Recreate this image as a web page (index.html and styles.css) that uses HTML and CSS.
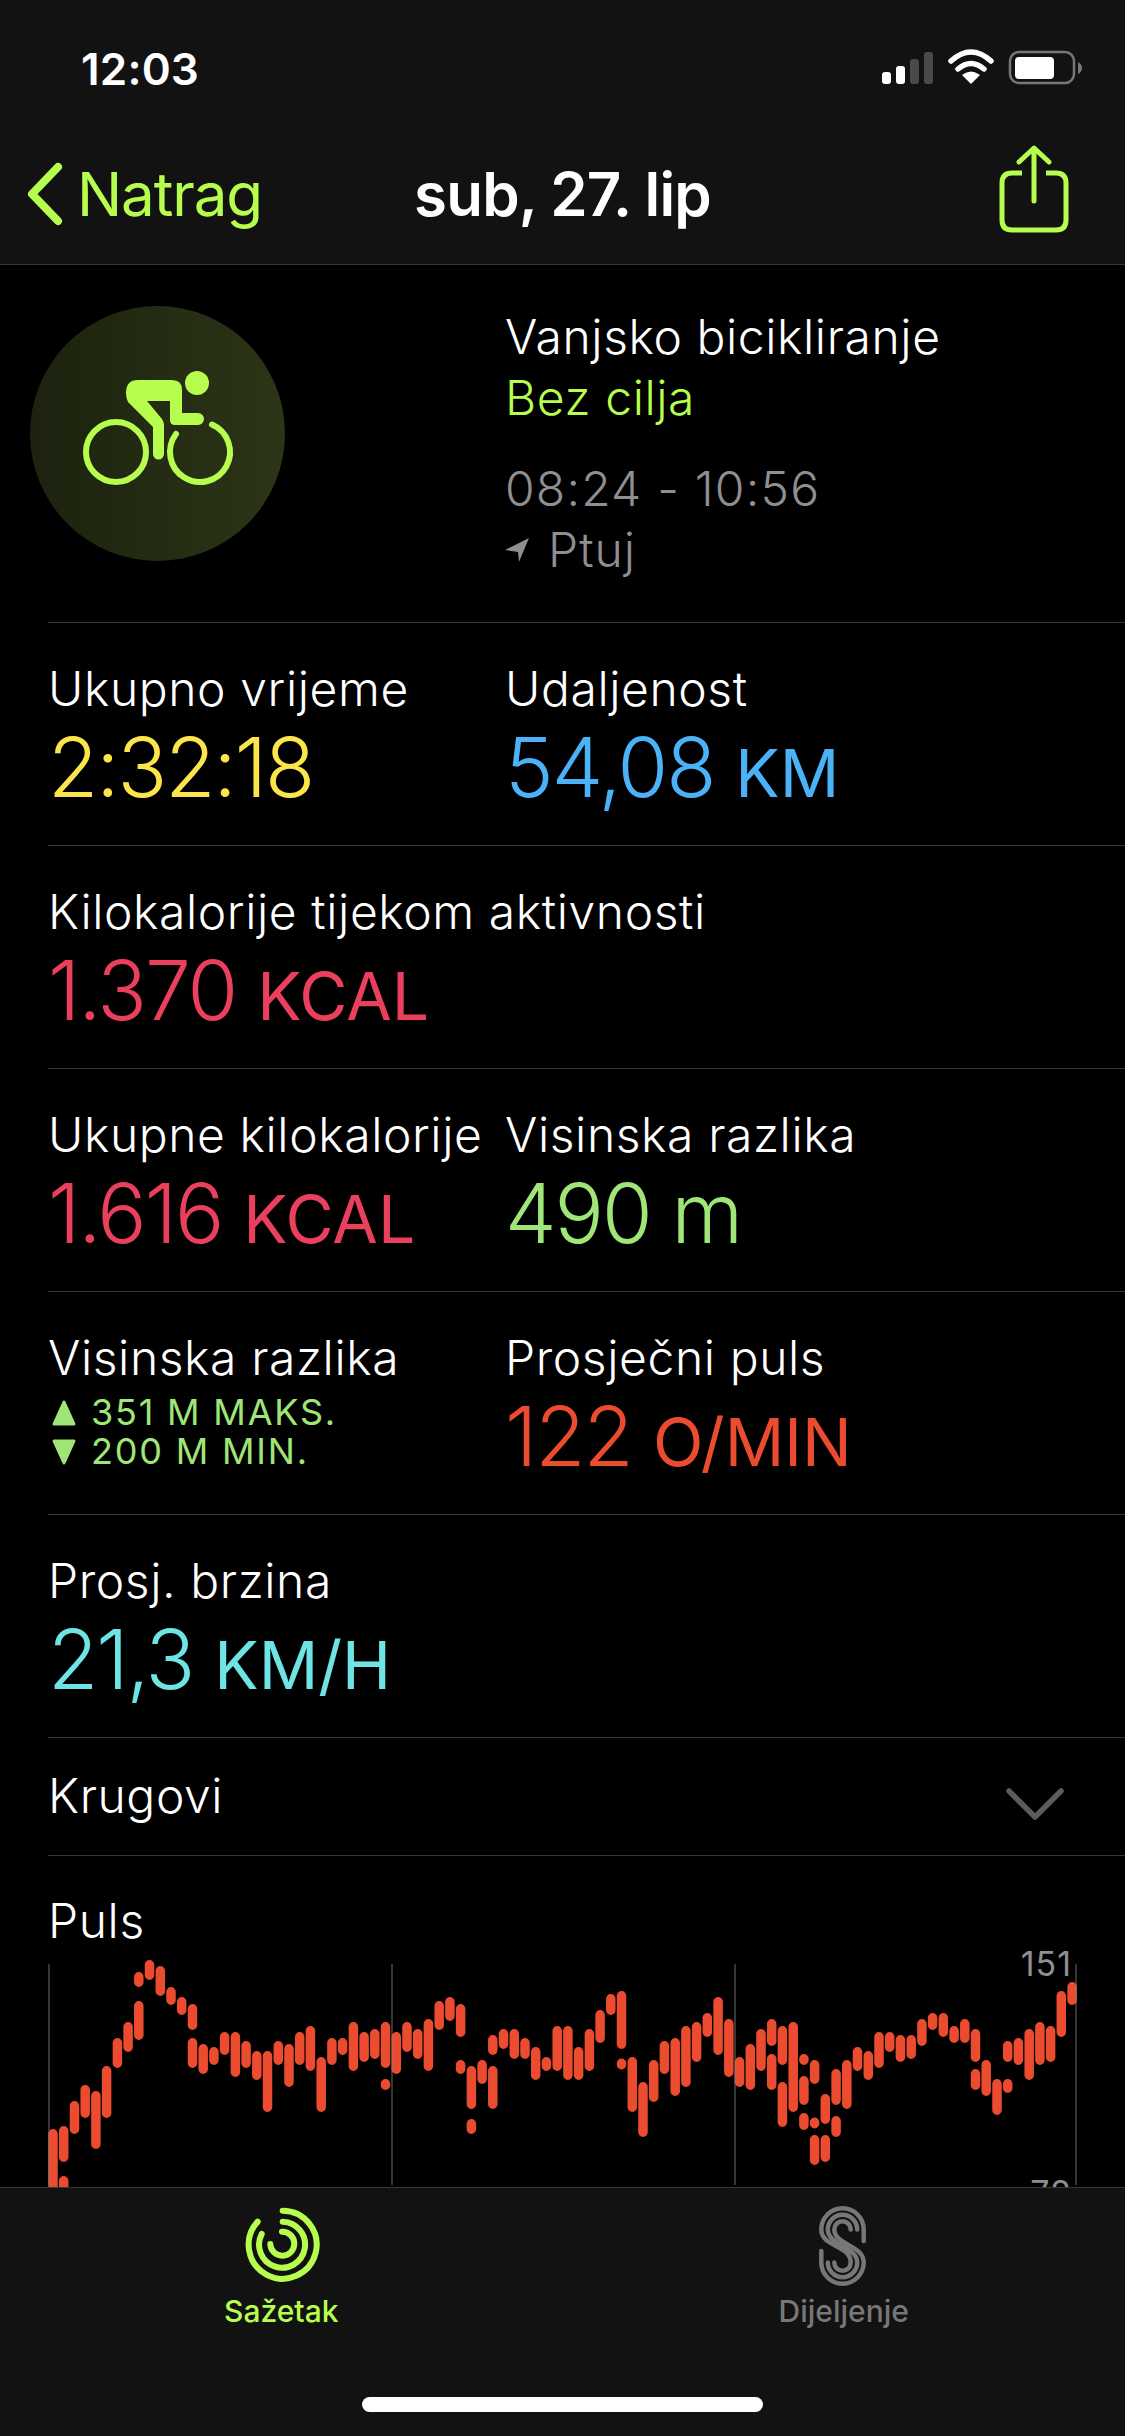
FILE: index.html

```html
<!DOCTYPE html>
<html lang="hr">
<head>
<meta charset="UTF-8" />
<meta name="viewport" content="width=device-width, initial-scale=1" />
<title>Vanjsko bicikliranje</title>
<link rel="stylesheet" href="styles.css">
</head>
<body>
<div class="app">

  <header class="top">
    <div class="status">
      <span class="clock">12:03</span>
      <svg class="status-icons" width="240" height="60" viewBox="0 0 240 60">
        <rect x="22" y="33" width="9" height="12" rx="3" fill="#fff"/>
        <rect x="36" y="27" width="9" height="18" rx="3" fill="#fff"/>
        <rect x="50" y="20" width="9" height="25" rx="3" fill="#4a4a4a"/>
        <rect x="64" y="13" width="9" height="32" rx="3" fill="#4a4a4a"/>
        <path d="M91 22 Q111 4 131 22" fill="none" stroke="#fff" stroke-width="5.5" stroke-linecap="round"/>
        <path d="M98 30 Q111 19 124 30" fill="none" stroke="#fff" stroke-width="5.5" stroke-linecap="round"/>
        <path d="M111 45 L102 36 Q111 29 120 36 Z" fill="#fff"/>
        <rect x="150" y="13" width="64" height="31" rx="9" fill="none" stroke="#777" stroke-width="2.5"/>
        <rect x="155" y="18" width="39" height="22" rx="4" fill="#fff"/>
        <path d="M218 23 Q222 25 222 29 Q222 33 218 35 Z" fill="#777"/>
      </svg>
    </div>
    <nav class="nav">
      <div class="back">
        <svg width="38" height="64" viewBox="0 0 38 64">
          <path d="M32 5 L6 32 L32 59" fill="none" stroke="#b7fd4e" stroke-width="8" stroke-linecap="round" stroke-linejoin="round"/>
        </svg>
        <span>Natrag</span>
      </div>
      <div class="nav-title">sub, 27. lip</div>
      <svg class="share" width="100" height="120" viewBox="0 0 100 120">
        <path d="M42 43 H32 Q22 43 22 53 V90 Q22 100 32 100 H76 Q86 100 86 90 V53 Q86 43 76 43 H66" fill="none" stroke="#b7fd4e" stroke-width="5"/>
        <path d="M54 71 V19 M39 32 L54 18 L69 32" fill="none" stroke="#b7fd4e" stroke-width="5" stroke-linecap="round" stroke-linejoin="round"/>
      </svg>
    </nav>
  </header>

  <main class="content">

    <section class="row summary">
      <div class="activity-icon">
        <svg width="200" height="160" viewBox="0 0 200 160">
          <circle cx="137" cy="33" r="12" fill="#b7fd4e"/>
          <path d="M78 30 H112 Q122 30 122 40 V63 H138 A6 6 0 0 1 138 75 H115 Q110 75 110 70 V51 H87 L102 69 Q104 72 104 75 V104 A5.5 5.5 0 0 1 93 104 V77 L68 52 Q66 48 66 43 Q66 30 78 30 Z" fill="#b7fd4e"/>
          <circle cx="56" cy="102" r="30" fill="none" stroke="#b7fd4e" stroke-width="6"/>
          <path d="M116 84 A30 30 0 1 0 152 74.500" fill="none" stroke="#b7fd4e" stroke-width="6" stroke-linecap="round"/>
        </svg>
      </div>
      <div class="summary-text">
        <div>Vanjsko bicikliranje</div>
        <div class="lime">Bez cilja</div>
        <div class="muted gap">08:24 - 10:56</div>
        <div class="muted place">
          <svg width="24" height="24" viewBox="0 0 24 24"><path d="M24 0 L0 12 L13 14 L14 24 Z" fill="#8e8e93"/></svg>
          <span>Ptuj</span>
        </div>
      </div>
    </section>

    <section class="row">
      <div class="metric">
        <div class="label">Ukupno vrijeme</div>
        <div class="value yellow">2:32:18</div>
      </div>
      <div class="metric">
        <div class="label">Udaljenost</div>
        <div class="value blue">54,08 <span class="unit">KM</span></div>
      </div>
    </section>

    <section class="row">
      <div class="metric">
        <div class="label">Kilokalorije tijekom aktivnosti</div>
        <div class="value pink">1.370 <span class="unit">KCAL</span></div>
      </div>
    </section>

    <section class="row">
      <div class="metric">
        <div class="label">Ukupne kilokalorije</div>
        <div class="value pink">1.616 <span class="unit">KCAL</span></div>
      </div>
      <div class="metric">
        <div class="label">Visinska razlika</div>
        <div class="value green">490 m</div>
      </div>
    </section>

    <section class="row">
      <div class="metric">
        <div class="label">Visinska razlika</div>
        <div class="elevation">
          <div class="elevation-line">
            <svg width="24" height="26" viewBox="0 0 24 26"><path d="M12 2 L22 24 H2 Z" fill="#a0e578" stroke="#a0e578" stroke-width="3" stroke-linejoin="round"/></svg>
            <span>351 M MAKS.</span>
          </div>
          <div class="elevation-line">
            <svg width="24" height="26" viewBox="0 0 24 26"><path d="M12 24 L22 2 H2 Z" fill="#a0e578" stroke="#a0e578" stroke-width="3" stroke-linejoin="round"/></svg>
            <span>200 M MIN.</span>
          </div>
        </div>
      </div>
      <div class="metric">
        <div class="label">Prosječni puls</div>
        <div class="value red">122 <span class="unit">O/MIN</span></div>
      </div>
    </section>

    <section class="row">
      <div class="metric">
        <div class="label">Prosj. brzina</div>
        <div class="value cyan">21,3 <span class="unit">KM/H</span></div>
      </div>
    </section>

    <section class="row laps">
      <div class="label">Krugovi</div>
      <svg class="laps-arrow" width="60" height="34" viewBox="0 0 60 34">
        <path d="M4 4 L30 30 L56 4" fill="none" stroke="#5c5c5e" stroke-width="5.500" stroke-linecap="round" stroke-linejoin="round"/>
      </svg>
    </section>

    <section class="pulse">
      <div class="label pulse-label">Puls</div>
      <svg id="pulse-chart" class="pulse-chart" width="1125" height="232" viewBox="0 0 1125 232">
        <text class="axis-text" x="1072" y="23">151</text>
        <text class="axis-text" x="1072" y="252">78</text>
      </svg>
    </section>

  </main>

  <footer class="tabbar">
    <div class="tabs">
      <div class="tab active">
        <svg width="100" height="90" viewBox="0 0 100 90">
          <g fill="none" stroke="#b7fd4e" stroke-width="6" stroke-linecap="round">
            <path d="M51.700 9.700 A34 34 0 1 1 26.700 20.600"/>
            <path d="M51.700 20.700 A23 23 0 1 1 30.700 33"/>
            <path d="M51 30.700 A12 12 0 1 1 39.300 43"/>
          </g>
        </svg>
        <span>Sažetak</span>
      </div>
      <div class="tab">
        <svg width="90" height="90" viewBox="0 0 90 90">
          <g fill="none" stroke="#777" stroke-width="4.500" stroke-linecap="round">
            <path d="M64.700 40 V28.500 A21.200 21.200 0 0 0 22.300 28.500 C22.300 46 51.700 44 51.700 61.500 A8.200 8.200 0 0 1 35.300 61.500"/>
            <path d="M58.200 28.500 A14.700 14.700 0 0 0 28.800 28.500 C28.800 44 58.200 46 58.200 61.500 A14.700 14.700 0 0 1 28.800 61.500"/>
            <path d="M51.700 28.500 A8.200 8.200 0 0 0 35.300 28.500 C35.300 44 64.700 44 64.700 61.500 A21.200 21.200 0 0 1 22.300 61.500 V50"/>
          </g>
        </svg>
        <span>Dijeljenje</span>
      </div>
    </div>
    <div class="home-bar"></div>
  </footer>

</div>
<script src="chart.js"></script>
</body>
</html>
```

FILE: styles.css

```css
* {
  box-sizing: border-box;
}
body {
  margin: 0;
  background: #000;
  color: #fff;
  font-family: Inter, "Liberation Sans", sans-serif;
}
.app {
  width: 1125px;
  height: 2436px;
  display: flex;
  flex-direction: column;
  overflow: hidden;
}

/* Status bar and nav */
.top {
  height: 265px;
  background: #121212;
  border-bottom: 1px solid #38383a;
}
.status {
  height: 138px;
  padding: 0 25px 0 81px;
  display: flex;
  align-items: center;
  justify-content: space-between;
}
.clock {
  font-size: 44px;
  font-weight: 600;
  letter-spacing: 0.200px;
}
.nav {
  height: 112px;
  margin-bottom: 14px;
  padding: 0 26px;
  display: grid;
  grid-template-columns: 1fr auto 1fr;
  grid-template-rows: 112px;
  align-items: center;
}
.back {
  display: flex;
  align-items: center;
  gap: 13px;
  color: #b7fd4e;
  font-size: 60px;
  letter-spacing: -1.100px;
}
.nav-title {
  font-size: 60px;
  font-weight: 600;
  letter-spacing: -0.800px;
}
.share {
  justify-self: end;
  margin-right: 19px;
  margin-bottom: 8px;
}

/* Rows */
.content {
  flex: 1;
  min-height: 0;
  overflow: hidden;
}
.row {
  height: 223px;
  margin-left: 48px;
  padding-top: 37px;
  display: grid;
  grid-template-columns: 457px 1fr;
  border-bottom: 1px solid #38383a;
}
.metric {
  white-space: nowrap;
}
.label {
  font-size: 48px;
  font-weight: 350;
  line-height: 58px;
  letter-spacing: 0.600px;
}
.value {
  margin-top: 3px;
  font-size: 82px;
  font-weight: 350;
  line-height: 94px;
  letter-spacing: -2px;
}
.unit {
  font-size: 66px;
  font-weight: 400;
  letter-spacing: 0;
}
.yellow { color: #fbe54a; }
.blue { color: #4cb2f8; }
.pink { color: #eb3f5e; }
.green { color: #a0e578; }
.red { color: #eb4b2e; }
.cyan { color: #6fe4e4; }
.lime { color: #b7fd4e; }
.muted { color: #8e8e93; }

/* Workout summary */
.summary {
  height: 358px;
  padding-top: 41px;
}
.activity-icon {
  width: 255px;
  height: 255px;
  margin-left: -18px;
  border-radius: 50%;
  background: linear-gradient(90deg, #1c220e, #2c3517);
  display: flex;
  align-items: center;
  justify-content: center;
}
.activity-icon svg {
  margin-left: 5px;
  margin-bottom: 7px;
}
.summary-text {
  font-size: 48px;
  font-weight: 350;
  line-height: 61px;
  letter-spacing: 0.600px;
  white-space: nowrap;
}
.gap {
  margin-top: 30px;
  letter-spacing: 1.200px;
}
.place {
  display: flex;
  align-items: center;
  gap: 19px;
  letter-spacing: 1px;
}

/* Elevation min and max */
.elevation {
  margin-top: 6px;
  padding-left: 4px;
  color: #a0e578;
  font-size: 36px;
  font-weight: 400;
  line-height: 39px;
  letter-spacing: 1.800px;
}
.elevation-line {
  display: flex;
  align-items: center;
  gap: 15px;
}

.laps {
  height: 118px;
  padding-top: 29px;
  padding-right: 60px;
  display: flex;
  justify-content: space-between;
}
.laps-arrow {
  margin-top: 20px;
}

/* Heart rate chart */
.pulse-label {
  margin-left: 48px;
  margin-top: 36px;
  margin-bottom: 3px;
}
.pulse-chart {
  display: block;
  overflow: visible;
}
.axis-text {
  fill: #8e8e93;
  font-size: 34px;
  text-anchor: end;
  font-family: Inter, sans-serif;
  letter-spacing: 1px;
}

/* Tab bar */
.tabbar {
  height: 249px;
  padding-top: 13px;
  background: #121212;
  border-top: 1px solid #38383a;
  display: flex;
  flex-direction: column;
}
.tabs {
  display: grid;
  grid-template-columns: 1fr 1fr;
}
.tab {
  display: flex;
  flex-direction: column;
  align-items: center;
  color: #777;
  font-size: 30px;
  font-weight: 500;
  line-height: 40px;
}
.tab.active {
  color: #b7fd4e;
}
.home-bar {
  width: 401px;
  height: 15px;
  margin: auto auto 24px;
  background: #fff;
  border-radius: 8px;
}
```

FILE: chart.js

```js
// Heart rate ranges per column, as [top, bottom] in chart pixels
const ranges = [
  [[176, 240]], [[173, 209], [223, 240]], [[148, 181]], [[132, 165]], [[138, 196]], [[113, 165]],
  [[85, 115]], [[69, 99]], [[48, 87], [19, 34]], [[7, 27]], [[13, 43]], [[34, 52]],
  [[44, 62]], [[51, 77], [85, 115]], [[91, 121]], [[94, 112]], [[79, 102]], [[79, 124]],
  [[88, 115]], [[98, 127]], [[98, 159]], [[88, 112]], [[91, 134]], [[79, 112]],
  [[73, 118]], [[104, 159]], [[85, 112]], [[85, 102]], [[69, 118]], [[79, 109]],
  [[76, 106]], [[69, 115], [126, 137]], [[79, 121]], [[69, 99]], [[76, 106]], [[66, 118]],
  [[48, 77]], [[44, 68]], [[51, 84], [107, 121]], [[113, 156], [166, 181]], [[107, 131]], [[82, 102], [113, 156]],
  [[76, 96]], [[76, 106]], [[85, 106]], [[94, 127]], [[104, 118]], [[73, 118]],
  [[73, 127]], [[94, 127]], [[76, 118]], [[57, 90]], [[41, 62]], [[38, 96], [107, 115]],
  [[104, 159]], [[129, 184]], [[107, 149]], [[88, 121]], [[85, 143]], [[73, 134]],
  [[69, 109]], [[60, 84]], [[44, 102]], [[66, 124]], [[104, 134]], [[91, 137]],
  [[76, 118]], [[66, 93], [101, 137]], [[73, 112], [129, 174]], [[69, 159]], [[101, 112], [123, 152], [160, 177]], [[107, 131], [166, 174], [182, 212]],
  [[141, 171], [182, 209]], [[116, 152], [163, 184]], [[107, 156]], [[94, 118]], [[98, 127]], [[79, 115]],
  [[79, 99]], [[82, 109]], [[82, 106]], [[66, 93]], [[60, 77]], [[60, 84]],
  [[73, 90]], [[66, 90]], [[76, 109], [116, 137]], [[107, 143]], [[126, 162]], [[88, 109], [126, 140]],
  [[85, 112]], [[76, 127]], [[69, 112]], [[73, 109]], [[38, 84]], [[29, 52]]
];

const chart = document.getElementById('pulse-chart');
const ns = 'http://www.w3.org/2000/svg';
const barWidth = 9.5;
const columnStep = 10.727;

function addPath(d, stroke, width, cap) {
  const path = document.createElementNS(ns, 'path');
  path.setAttribute('d', d);
  path.setAttribute('fill', 'none');
  path.setAttribute('stroke', stroke);
  path.setAttribute('stroke-width', width);
  path.setAttribute('stroke-linecap', cap);
  chart.appendChild(path);
}

let bars = '';
ranges.forEach((column, i) => {
  const x = (53 + i * columnStep).toFixed(1);
  column.forEach(([top, bottom]) => {
    bars += `M${x} ${top + barWidth / 2} V${bottom - barWidth / 2} `;
  });
});
addPath(bars, '#eb4b2e', barWidth, 'round');

// Grid lines sit on top of the bars, see-through
const grid = [49, 392, 735, 1076].map(x => `M${x} 11 V232`).join(' ');
addPath(grid, 'rgba(136,136,136,0.4)', 2, 'butt');
```
